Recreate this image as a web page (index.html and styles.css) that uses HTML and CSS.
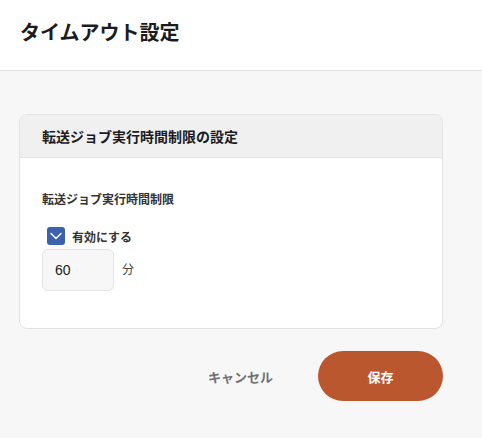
FILE: index.html
```html
<!DOCTYPE html>
<html lang="ja">
<head>
<meta charset="utf-8">
<link rel="stylesheet" href="styles.css">
</head>
<body>
<header class="page-header">
  <h1 class="page-title">タイムアウト設定</h1>
</header>
<main class="page-main">
  <section class="card">
    <div class="card-header">
      <h2 class="card-title">転送ジョブ実行時間制限の設定</h2>
    </div>
    <div class="card-body">
      <div class="field-label">転送ジョブ実行時間制限</div>
      <label class="check-row">
        <span class="checkbox">
          <svg width="12" height="8" viewBox="0 0 12 8"><path d="M1 1.5 L6 6.5 L11 1.5" fill="none" stroke="#fff" stroke-width="1.4" stroke-linecap="round" stroke-linejoin="round"/></svg>
        </span>
        <span class="check-text">有効にする</span>
      </label>
      <div class="input-row">
        <div class="num-input">60</div>
        <span class="unit">分</span>
      </div>
    </div>
  </section>
  <div class="actions">
    <button class="btn btn-cancel">キャンセル</button>
    <button class="btn btn-save">保存</button>
  </div>
</main>
</body>
</html>
```
FILE: styles.css
```css
* { box-sizing: border-box; }
html, body { margin: 0; padding: 0; }
body {
  width: 482px;
  height: 438px;
  background: #f7f7f7;
  font-family: "Noto Sans CJK JP", "Noto Sans", sans-serif;
  color: #1d1d1f;
  overflow: hidden;
}
.page-header {
  height: 71px;
  background: #fff;
  border-bottom: 1px solid #e2e2e2;
  display: flex;
  align-items: center;
  padding-left: 20px;
}
.page-title {
  margin: 0;
  margin-top: -6px;
  font-size: 20px;
  font-weight: 700;
  line-height: 28px;
  color: #1c1c1e;
}
.page-main {
  padding: 43px 39px 0 19px;
}
.card {
  background: #fff;
  border: 1px solid #e3e3e3;
  border-radius: 8px;
  overflow: hidden;
}
.card-header {
  height: 43px;
  background: #f0f0f0;
  border-bottom: 1px solid #e3e3e3;
  display: flex;
  align-items: center;
  padding-left: 22px;
}
.card-title {
  margin: 0;
  font-size: 14px;
  font-weight: 700;
  line-height: 20px;
  color: #1c1c1e;
}
.card-body {
  padding: 32px 22px 37px;
}
.field-label {
  font-size: 12px;
  font-weight: 700;
  line-height: 17px;
  color: #333;
}
.check-row {
  display: flex;
  align-items: center;
  gap: 7px;
  margin-top: 20px;
  padding-left: 5px;
}
.checkbox {
  width: 18px;
  height: 18px;
  border-radius: 3px;
  background: #3d62ad;
  display: flex;
  align-items: center;
  justify-content: center;
}
.check-text {
  font-size: 12px;
  font-weight: 700;
  color: #333;
  line-height: 17px;
}
.input-row {
  display: flex;
  align-items: center;
  gap: 8px;
  margin-top: 4px;
}
.num-input {
  width: 72px;
  height: 42px;
  border: 1px solid #e3e3e3;
  border-radius: 6px;
  background: #f7f7f7;
  display: flex;
  align-items: center;
  padding-left: 12px;
  font-family: "Liberation Sans", "Noto Sans", sans-serif;
  font-size: 14px;
  color: #222;
}
.unit {
  font-size: 12px;
  color: #444;
  margin-top: -4px;
}
.actions {
  display: flex;
  justify-content: flex-end;
  gap: 15px;
  margin-top: 22px;
}
.btn {
  width: 125px;
  height: 50px;
  border: none;
  border-radius: 25px;
  font-family: "Noto Sans CJK JP", "Noto Sans", sans-serif;
  font-size: 13px;
  font-weight: 700;
  cursor: pointer;
}
.btn-cancel {
  background: transparent;
  color: #707070;
}
.btn-save {
  background: #bb572e;
  color: #fff;
}
```
